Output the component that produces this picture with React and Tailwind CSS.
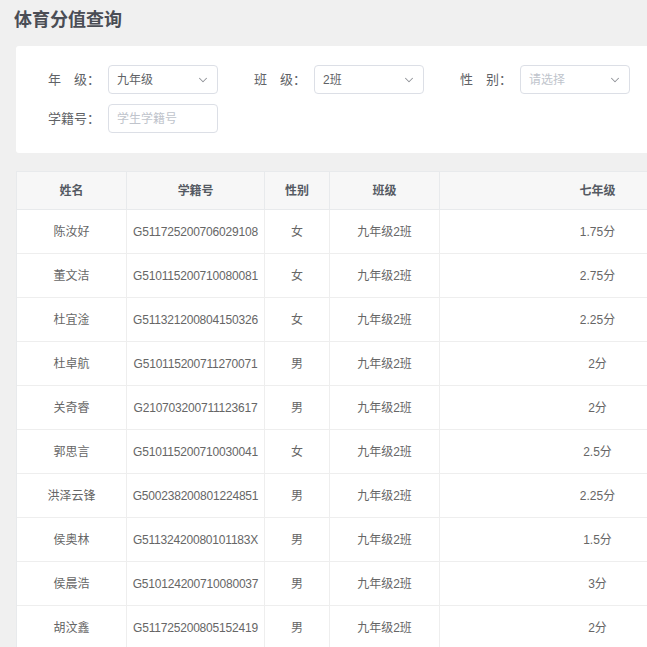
import { ChevronDown } from 'lucide-react';

const rows = [
  ['陈汝好', 'G511725200706029108', '女', '九年级2班', '1.75分'],
  ['董文洁', 'G510115200710080081', '女', '九年级2班', '2.75分'],
  ['杜宜淦', 'G511321200804150326', '女', '九年级2班', '2.25分'],
  ['杜卓航', 'G510115200711270071', '男', '九年级2班', '2分'],
  ['关奇睿', 'G210703200711123617', '男', '九年级2班', '2分'],
  ['郭思言', 'G510115200710030041', '女', '九年级2班', '2.5分'],
  ['洪泽云锋', 'G500238200801224851', '男', '九年级2班', '2.25分'],
  ['侯奥林', 'G51132420080101183X', '男', '九年级2班', '1.5分'],
  ['侯晨浩', 'G510124200710080037', '男', '九年级2班', '3分'],
  ['胡汶鑫', 'G511725200805152419', '男', '九年级2班', '2分'],
];

const cols = ['w-[110px]', 'w-[138px] tracking-[-0.2px]', 'w-[65px]', 'w-[110px]', 'w-[316px]'];
const heads = ['姓名', '学籍号', '性别', '班级', '七年级'];

function Field({ label, value, placeholder, select }) {
  return (
    <div className="flex items-center mr-[36px]">
      <span className="w-[60px] pr-[8px] text-right text-[13px] text-[#606266] whitespace-pre">{label}</span>
      <div className="flex h-[29px] w-[110px] items-center justify-between rounded-[4px] border border-[#dcdfe6] bg-white pl-[8px] pr-[7px] text-[12px]">
        <span className={value ? 'text-[#606266]' : 'text-[#c0c4cc]'}>{value || placeholder}</span>
        {select && <ChevronDown size={14} strokeWidth={1.8} className="text-[#909399]" />}
      </div>
    </div>
  );
}

export default function App() {
  return (
    <div
      className="h-[647px] w-[647px] overflow-hidden bg-[#f0f0f0] pl-[16px]"
      style={{ fontFamily: '"Liberation Sans", "Noto Sans CJK SC", sans-serif' }}
    >
      <h1 className="-ml-[2px] pt-[7px] h-[46px] text-[18px] font-bold text-[#4a4d55]">体育分值查询</h1>

      <div className="w-[680px] rounded-[3px] bg-white pl-[32px] pt-[19px] pb-[20px]">
        <div className="flex">
          <Field label="年　级：" value="九年级" select />
          <Field label="班　级：" value="2班" select />
          <Field label="性　别：" placeholder="请选择" select />
        </div>
        <div className="mt-[10px] flex">
          <Field label="学籍号：" placeholder="学生学籍号" />
        </div>
      </div>

      <div className="mt-[18px] w-[740px] border-l border-t border-[#e8eaec] bg-white text-[12px]">
        <div className="flex h-[38px] bg-[#f7f7f7] font-bold text-[#555a63]">
          {heads.map((h, i) => (
            <div key={h} className={`${cols[i]} flex shrink-0 items-center justify-center border-b border-r border-[#e8eaec]`}>
              {h}
            </div>
          ))}
        </div>
        {rows.map((r) => (
          <div key={r[1]} className="flex h-[44px] text-[#666]">
            {r.map((c, i) => (
              <div key={i} className={`${cols[i]} flex shrink-0 items-center justify-center border-b border-r border-[#eeeeee]`}>
                {c}
              </div>
            ))}
          </div>
        ))}
      </div>
    </div>
  );
}
